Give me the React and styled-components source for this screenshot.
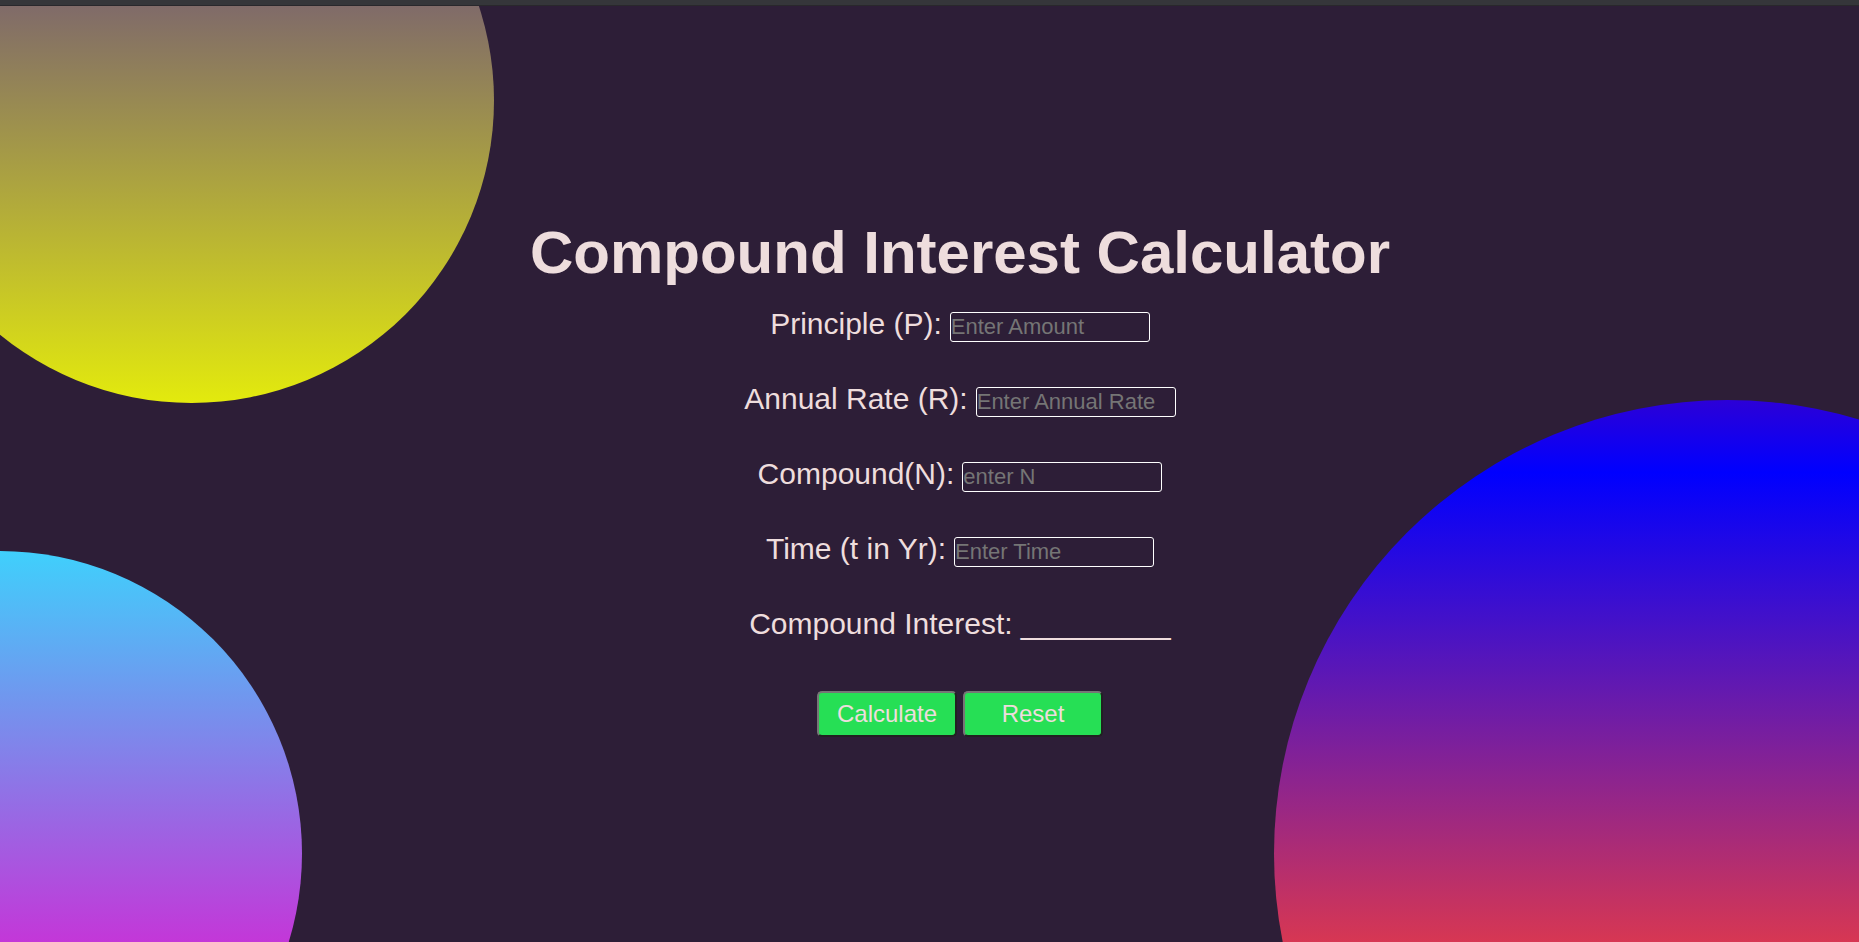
import React, { useState } from "react";
import styled, { createGlobalStyle } from "styled-components";

const GlobalStyle = createGlobalStyle`
  *, *::before, *::after {
    box-sizing: border-box;
  }
  body {
    margin: 0;
    background: #2d1e37;
    color: #eedddd;
    font-family: "Liberation Sans", Arial, sans-serif;
  }
`;

const Page = styled.div`
  min-height: 100vh;
  display: flex;
  flex-direction: column;
`;

const TopBar = styled.div`
  flex: none;
  height: 6px;
  background: #35363a;
  border-bottom: 1px solid #29282c;
`;

const Stage = styled.main`
  position: relative;
  flex: 1;
  display: flex;
  flex-direction: column;
  align-items: center;
  justify-content: center;
  padding: 6px 0 0 61px;
  overflow: hidden;
`;

const Circle = styled.div`
  position: absolute;
  width: ${(p) => p.$size}px;
  height: ${(p) => p.$size}px;
  border-radius: 50%;
`;

const YellowCircle = styled(Circle)`
  top: -208px;
  left: -111px;
  background: linear-gradient(#4c2899, #e3ea0d);
`;

const CyanCircle = styled(Circle)`
  bottom: -214px;
  left: -303px;
  background: linear-gradient(#3fd0fc, #c436d8 65%);
`;

const BlueCircle = styled(Circle)`
  bottom: -365px;
  right: -322px;
  background: linear-gradient(#2c00d7, #0000ff 8%, #d83752 60%);
`;

const Form = styled.form`
  position: relative;
  display: flex;
  flex-direction: column;
  align-items: center;
`;

const Title = styled.h1`
  margin: 0 0 17px;
  font-size: 60px;
  line-height: 72px;
`;

const Fields = styled.div`
  display: flex;
  flex-direction: column;
  gap: 40px;
`;

const Row = styled.div`
  display: flex;
  align-items: baseline;
  justify-content: center;
  gap: 8px;
  height: 35px;
  font-size: 30px;
  line-height: 35px;
`;

const Field = styled.input`
  width: 200px;
  height: 30px;
  padding: 0;
  border: 1px solid #ffffff;
  border-radius: 3px;
  background: transparent;
  color: #eedddd;
  font-family: inherit;
  font-size: 22px;

  &::placeholder {
    color: #757575;
  }
`;

const Actions = styled.div`
  display: flex;
  gap: 6px;
  margin-top: 50px;
`;

const Button = styled.button`
  width: 140px;
  height: 46px;
  padding: 0;
  border: 2px solid;
  border-color: #767676 #212121 #212121 #767676;
  border-radius: 5px;
  background: #26df55;
  color: #eedddd;
  font-family: inherit;
  font-size: 24px;
  cursor: pointer;
`;

const FIELDS = [
  { id: "principal", label: "Principle (P):", placeholder: "Enter Amount" },
  { id: "rate", label: "Annual Rate (R):", placeholder: "Enter Annual Rate" },
  { id: "compound", label: "Compound(N):", placeholder: "enter N" },
  { id: "time", label: "Time (t in Yr):", placeholder: "Enter Time" },
];

const EMPTY = { principal: "", rate: "", compound: "", time: "" };
const BLANK = "_________";

export default function App() {
  const [values, setValues] = useState(EMPTY);
  const [result, setResult] = useState(BLANK);

  const calculate = (event) => {
    event.preventDefault();
    const p = Number(values.principal);
    const r = Number(values.rate) / 100;
    const n = Number(values.compound);
    const t = Number(values.time);
    const interest = p * Math.pow(1 + r / n, n * t) - p;
    setResult(Number.isFinite(interest) ? interest.toFixed(2) : BLANK);
  };

  const reset = () => {
    setValues(EMPTY);
    setResult(BLANK);
  };

  return (
    <Page>
      <GlobalStyle />
      <TopBar />
      <Stage>
        <YellowCircle $size={605} />
        <CyanCircle $size={605} />
        <BlueCircle $size={907} />
        <Form onSubmit={calculate} onReset={reset}>
          <Title>Compound Interest Calculator</Title>
          <Fields>
            {FIELDS.map(({ id, label, placeholder }) => (
              <Row key={id}>
                <label htmlFor={id}>{label}</label>
                <Field
                  id={id}
                  inputMode="decimal"
                  placeholder={placeholder}
                  value={values[id]}
                  onChange={(e) => setValues({ ...values, [id]: e.target.value })}
                />
              </Row>
            ))}
            <Row>
              <span>Compound Interest:</span>
              <output>{result}</output>
            </Row>
          </Fields>
          <Actions>
            <Button type="submit">Calculate</Button>
            <Button type="reset">Reset</Button>
          </Actions>
        </Form>
      </Stage>
    </Page>
  );
}
